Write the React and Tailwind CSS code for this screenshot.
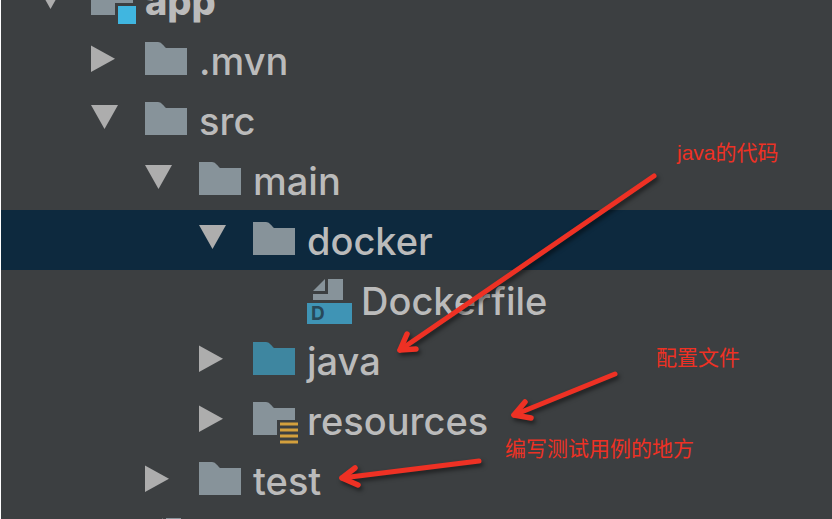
import { useState } from 'react';
import clsx from 'clsx';

const TREE = [
  { id: 'app', name: 'app', icon: 'module', level: 0, folder: true, bold: true },
  { id: 'mvn', name: '.mvn', icon: 'folder', level: 1, folder: true, parent: 'app' },
  { id: 'src', name: 'src', icon: 'folder', level: 1, folder: true, parent: 'app' },
  { id: 'main', name: 'main', icon: 'folder', level: 2, folder: true, parent: 'src' },
  { id: 'docker', name: 'docker', icon: 'folder', level: 3, folder: true, parent: 'main' },
  { id: 'dockerfile', name: 'Dockerfile', icon: 'dockerfile', level: 4, parent: 'docker' },
  { id: 'java', name: 'java', icon: 'source', level: 3, folder: true, parent: 'main' },
  { id: 'resources', name: 'resources', icon: 'resources', level: 3, folder: true, parent: 'main' },
  { id: 'test', name: 'test', icon: 'folder', level: 2, folder: true, parent: 'src' },
  { id: 'file', name: '', icon: 'file', level: 1, parent: 'app' },
];

const INDENT = {
  0: 'pl-[36px]',
  1: 'pl-[90px]',
  2: 'pl-[144px]',
  3: 'pl-[198px]',
  4: 'pl-[252px]',
};

const FOLDER = 'M0 6H13C16 6 18 9 21 12H42V39H0Z';
const FOLDER_CUT = 'M0 6H13C16 6 18 9 21 12H42V24H24V39H0Z';

function NodeIcon({ type }) {
  return (
    <svg className="w-12 h-12 shrink-0" viewBox="0 0 48 48" aria-hidden="true">
      {type === 'folder' && <path d={FOLDER} fill="#87939a" />}
      {type === 'source' && <path d={FOLDER} fill="#3e86a0" />}
      {type === 'module' && (
        <>
          <path d="M0 6H13C16 6 18 9 21 12H42V27H24V39H0Z" fill="#87939a" />
          <rect x="27" y="30" width="18" height="18" fill="#40b6e0" />
        </>
      )}
      {type === 'resources' && (
        <>
          <path d={FOLDER_CUT} fill="#87939a" />
          <path d="M27 28H45M27 34H45M27 40H45M27 46H45" stroke="#d3a03d" strokeWidth="3" />
        </>
      )}
      {type === 'dockerfile' && (
        <>
          <path d="M18 3V15H6Z" fill="#87939a" />
          <path d="M21 3H36V24H6V18H21Z" fill="#87939a" />
          <rect y="27" width="45" height="21" fill="#3f94b5" />
          <text x="4" y="44" fontSize="19" fontWeight="700" fill="#28495a" className="font-[Inter,sans-serif]">D</text>
        </>
      )}
      {type === 'file' && <path d="M18 2V14H6ZM21 2H36V42H6V17H21Z" fill="#87939a" />}
    </svg>
  );
}

function Arrow({ shaft, head }) {
  return (
    <g fill="none" stroke="#ee3124" strokeLinecap="round" strokeLinejoin="round">
      <path d={shaft} strokeWidth="5" />
      <path d={head} strokeWidth="5.5" />
    </g>
  );
}

function Note({ className, children }) {
  return (
    <p className={clsx("absolute whitespace-nowrap text-[21px] leading-7 text-[#ee3124] font-['Liberation_Sans','Noto_Sans_CJK_SC',sans-serif]", className)}>
      {children}
    </p>
  );
}

export default function App() {
  const [collapsed, setCollapsed] = useState(['mvn', 'java', 'resources', 'test']);
  const [selected, setSelected] = useState('docker');

  const toggle = (id) =>
    setCollapsed((prev) => (prev.includes(id) ? prev.filter((x) => x !== id) : [...prev, id]));

  const isVisible = (node) => {
    if (!node.parent) return true;
    if (collapsed.includes(node.parent)) return false;
    return isVisible(TREE.find((n) => n.id === node.parent));
  };

  return (
    <div className="relative h-screen overflow-hidden border-l border-white bg-[#3c3f41] font-[Inter,'Noto_Sans',sans-serif]">
      {/* ── Project tree, scrolled half a row down ── */}
      <ul className="-mt-[30px]">
        {TREE.filter(isVisible).map((node) => (
          <li
            key={node.id}
            onClick={() => setSelected(node.id)}
            className={clsx('flex h-15 items-center', INDENT[node.level], selected === node.id && 'bg-[#0d293e]')}
          >
            {node.folder ? (
              <button
                type="button"
                aria-label={`Toggle ${node.name}`}
                aria-expanded={!collapsed.includes(node.id)}
                onClick={() => toggle(node.id)}
                className="w-[54px] shrink-0"
              >
                <svg className="w-7 h-12" viewBox="0 0 28 48">
                  <path d={collapsed.includes(node.id) ? 'M0 9.5L24 22.7L0 36Z' : 'M0 9H27L13.5 33Z'} fill="#adadad" />
                </svg>
              </button>
            ) : (
              <span className="w-[54px] shrink-0" />
            )}
            <span className="w-[54px] shrink-0">
              <NodeIcon type={node.icon} />
            </span>
            <span className={clsx('pt-0.5 text-[38px] leading-none text-[#bbbbbb]', node.bold ? 'font-extrabold' : 'font-medium')}>
              {node.name}
            </span>
          </li>
        ))}
      </ul>

      {/* ── Annotations ── */}
      <svg
        className="pointer-events-none absolute left-0 top-0 h-[519px] w-[831px] drop-shadow-[2px_3px_2px_rgba(0,0,0,0.5)]"
        viewBox="1 0 831 519"
        aria-hidden="true"
      >
        <Arrow shaft="M654 176L400 350" head="M407 334L400 350L416 349" />
        <Arrow shaft="M615 374L514 415" head="M525 402L514 415L531 418" />
        <Arrow shaft="M479 461L342 478" head="M355 468L342 478L358 485" />
      </svg>
      <Note className="left-[676px] top-[139px]">java的代码</Note>
      <Note className="left-[655px] top-[344px]">配置文件</Note>
      <Note className="left-[504px] top-[435px]">编写测试用例的地方</Note>
    </div>
  );
}
